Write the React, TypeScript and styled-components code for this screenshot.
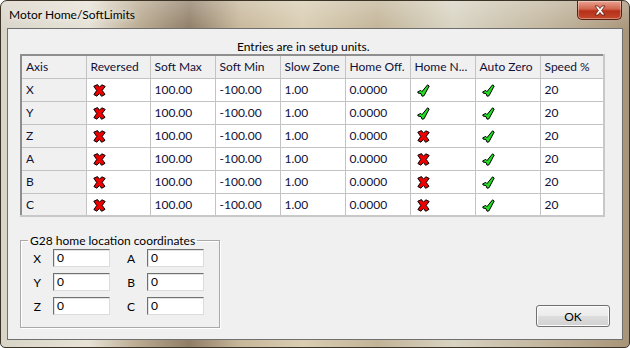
import styled, { createGlobalStyle } from "styled-components";

const GlobalStyle = createGlobalStyle`
  html, body {
    margin: 0;
    padding: 0;
    background: #ffffff;
  }
  body {
    font-family: Lato, "Noto Sans", sans-serif;
  }
`

const Window = styled.div`
  width: 630px;
  height: 348px;
  box-sizing: border-box;
  display: flex;
  flex-direction: column;
  border: 1px solid #3b3326;
  border-radius: 7px 7px 5px 5px;
  padding: 0 6px 7px 6px;
  background:
    linear-gradient(180deg, rgba(255,255,255,0.25) 0%, rgba(255,255,255,0) 30px),
    linear-gradient(90deg, #d9d4c8 0%, #e7e2d6 14%, #b9a98f 22%, #8f7d66 30%, #c7b79a 38%, #d9cdb2 48%, #c2b497 60%, #d8d3c2 72%, #c3b79f 86%, #a89478 100%);
  overflow: hidden;
`

const TitleBar = styled.div`
  height: 27px;
  display: flex;
  align-items: flex-start;
`

const Title = styled.div`
  font-size: 12px;
  color: #000;
  padding: 6px 0 0 2px;
  text-shadow: 0 0 6px rgba(255,255,255,0.9);
`

const CloseButton = styled.div`
  margin-left: auto;
  margin-right: 1px;
  width: 45px;
  height: 19px;
  box-sizing: border-box;
  border: 1px solid #5a2016;
  border-top: none;
  border-radius: 0 0 5px 5px;
  background: linear-gradient(180deg, #e9a493 0%, #d2634b 45%, #b5301a 55%, #c4482a 100%);
  display: flex;
  align-items: center;
  justify-content: center;
  box-shadow: inset 0 0 0 1px rgba(255,255,255,0.35);
`

const Client = styled.div`
  flex: 1;
  border: 1px solid #6f6f6f;
  background: #f0f0f0;
  padding: 10px 12px 11px 12px;
  display: flex;
  flex-direction: column;
  font-size: 12px;
  color: #000;
`

const Caption = styled.div`
  margin-left: 217px;
  height: 15px;
  line-height: 15px;
`

const Grid = styled.table`
  border-collapse: collapse;
  table-layout: fixed;
  width: 583px;
  border-top: 2px solid #8e8e8e;
  border-left: 2px solid #8e8e8e;
  border-right: 2px solid #c8c8c8;
  border-bottom: 2px solid #c8c8c8;
  color: #101038;
`

const HeadCell = styled.th`
  box-sizing: border-box;
  height: 23px;
  padding: 0 0 0 4px;
  text-align: left;
  font-weight: normal;
  background: #f0f0f0;
  border: 1px solid #c3c3c3;
  white-space: nowrap;
  overflow: hidden;
`

const Cell = styled.td<{ $axis?: boolean }>`
  box-sizing: border-box;
  height: 23px;
  padding: 0 0 0 4px;
  background: ${p => (p.$axis ? "#f0f0f0" : "#ffffff")};
  border: 1px solid #c3c3c3;
  white-space: nowrap;
  overflow: hidden;
`

const IconWrap = styled.span`
  display: inline-flex;
  padding-left: 2px;
  vertical-align: middle;
`

const Bottom = styled.div`
  margin-top: auto;
  display: flex;
  align-items: flex-end;
  justify-content: space-between;
`

const Group = styled.fieldset`
  margin: 0;
  width: 200px;
  height: 95px;
  box-sizing: border-box;
  border: 1px solid #a9a9a9;
  box-shadow: 1px 1px 0 #ffffff, inset 1px 1px 0 #ffffff;
  padding: 1px 0 0 9px;
`

const Legend = styled.legend`
  padding: 0 2px;
  margin-left: -2px;
`

const CoordGrid = styled.div`
  display: grid;
  grid-template-columns: 23px 57px 37px 57px;
  row-gap: 6px;
  align-items: center;
`

const CoordLabel = styled.div`
  text-align: right;
  padding-right: 12px;
`

const CoordInput = styled.div`
  height: 18px;
  box-sizing: border-box;
  border-top: 1px solid #707070;
  border-left: 1px solid #707070;
  border-right: 1px solid #dcdcdc;
  border-bottom: 1px solid #dcdcdc;
  background: #ffffff;
  line-height: 16px;
  padding-left: 3px;
  box-shadow: inset 1px 1px 0 #e3e3e3;
`

const OkButton = styled.button`
  width: 74px;
  height: 22px;
  margin-bottom: 1px;
  border: 1px solid #707070;
  border-radius: 3px;
  background: linear-gradient(180deg, #f3f3f3 0%, #ececec 48%, #dddddd 52%, #d1d1d1 100%);
  font-family: Lato, "Noto Sans", sans-serif;
  font-size: 12px;
  color: #000;
  padding: 0;
  box-shadow: inset 0 0 0 1px #fcfcfc;
`

function RedX() {
  return (
    <svg width="13" height="13" viewBox="0 0 13 13">
      <polygon
        points="0.8,2.2 4.5,0.6 6.5,3.2 8.8,0.8 12.2,2.4 9.2,6.4 12,10.4 8.6,12.3 6.4,9.4 3.9,12.2 0.9,10.6 3.7,6.5"
        fill="#ee0000"
        stroke="#000"
        strokeWidth="1"
        strokeLinejoin="round"
      />
    </svg>
  )
}

function GreenCheck() {
  return (
    <svg width="13" height="13" viewBox="0 0 13 13">
      <polygon
        points="0.8,7.8 3.8,6.4 5,7.6 10.6,0.8 12.2,2 7,11.8 5,12.2 4,9.6 1,9"
        fill="#22dd22"
        stroke="#000"
        strokeWidth="1"
        strokeLinejoin="round"
      />
    </svg>
  )
}

const columns = [
  { title: "Axis", w: 65 },
  { title: "Reversed", w: 64 },
  { title: "Soft Max", w: 65 },
  { title: "Soft Min", w: 65 },
  { title: "Slow Zone", w: 65 },
  { title: "Home Off.", w: 65 },
  { title: "Home N...", w: 65 },
  { title: "Auto Zero", w: 65 },
  { title: "Speed %", w: 64 },
]

const rows = [
  { axis: "X", homeNeg: true },
  { axis: "Y", homeNeg: true },
  { axis: "Z", homeNeg: false },
  { axis: "A", homeNeg: false },
  { axis: "B", homeNeg: false },
  { axis: "C", homeNeg: false },
]

const coords = [
  ["X", "A"],
  ["Y", "B"],
  ["Z", "C"],
]

export default function App() {
  return (
    <>
      <GlobalStyle />
      <Window>
        <TitleBar>
          <Title>Motor Home/SoftLimits</Title>
          <CloseButton>
            <svg width="14" height="11" viewBox="0 0 14 11">
              <path
                d="M2 1 L5 1 L7 3.5 L9 1 L12 1 L8.6 5.5 L12 10 L9 10 L7 7.5 L5 10 L2 10 L5.4 5.5 Z"
                fill="#ffffff"
                stroke="#5b1a10"
                strokeWidth="0.8"
              />
            </svg>
          </CloseButton>
        </TitleBar>
        <Client>
          <Caption>Entries are in setup units.</Caption>
          <Grid>
            <colgroup>
              {columns.map(c => (
                <col key={c.title} style={{ width: c.w }} />
              ))}
            </colgroup>
            <thead>
              <tr>
                {columns.map(c => (
                  <HeadCell key={c.title}>{c.title}</HeadCell>
                ))}
              </tr>
            </thead>
            <tbody>
              {rows.map(r => (
                <tr key={r.axis}>
                  <Cell $axis>{r.axis}</Cell>
                  <Cell><IconWrap><RedX /></IconWrap></Cell>
                  <Cell>100.00</Cell>
                  <Cell>-100.00</Cell>
                  <Cell>1.00</Cell>
                  <Cell>0.0000</Cell>
                  <Cell><IconWrap>{r.homeNeg ? <GreenCheck /> : <RedX />}</IconWrap></Cell>
                  <Cell><IconWrap><GreenCheck /></IconWrap></Cell>
                  <Cell>20</Cell>
                </tr>
              ))}
            </tbody>
          </Grid>
          <Bottom>
            <Group>
              <Legend>G28 home location coordinates</Legend>
              <CoordGrid>
                {coords.map(([a, b]) => [
                  <CoordLabel key={a + "l"}>{a}</CoordLabel>,
                  <CoordInput key={a + "i"}>0</CoordInput>,
                  <CoordLabel key={b + "l"}>{b}</CoordLabel>,
                  <CoordInput key={b + "i"}>0</CoordInput>,
                ])}
              </CoordGrid>
            </Group>
            <OkButton>OK</OkButton>
          </Bottom>
        </Client>
      </Window>
    </>
  )
}
